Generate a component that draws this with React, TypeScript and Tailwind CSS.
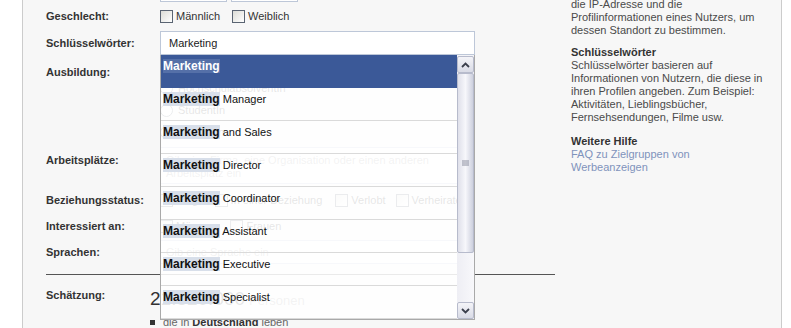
import type { ReactNode } from 'react'

/**
 * Ad targeting form: keyword field with its suggestion list open over
 * the rest of the form, help text in the right column.
 */

const SUGGESTIONS = [
  '',
  'Manager',
  'and Sales',
  'Director',
  'Coordinator',
  'Assistant',
  'Executive',
  'Specialist',
]

export default function App() {
  return (
    <div className="flex h-[328px] w-[791px] overflow-hidden bg-white font-['Liberation_Sans',Arial,sans-serif] text-[11px] leading-[13px] text-[#333]">
      <div className="w-[22px] shrink-0" />
      <div className="flex w-[760px] shrink-0 border-x border-[#cccccc] bg-[#f7f7f7]">
        <Form />
        <Sidebar />
      </div>
    </div>
  )
}

function Form() {
  return (
    <div className="w-[548px] shrink-0 pl-[23px] pr-[16px]">
      {/* bottom edge of the fields above, scrolled out of view */}
      <div className="ml-[114px] flex h-[2px] gap-[4px]">
        <div className="h-[2px] w-[67px] border-x border-b border-[#bdc7d8] bg-white" />
        <div className="h-[2px] w-[67px] border-x border-b border-[#bdc7d8] bg-white" />
      </div>

      <Row label="Geschlecht:" className="h-[29px] items-center">
        <div className="flex items-center">
          <Check label="Männlich" />
          <div className="w-[12px]" />
          <Check label="Weiblich" />
        </div>
      </Row>

      <Row label="Schlüsselwörter:" className="h-[24px] items-center">
        <div className="relative">
          <div className="flex h-[24px] w-[315px] items-center border border-[#bdc7d8] bg-white pl-[8px] text-[#222]">
            Marketing
          </div>
          <Suggestions />
        </div>
      </Row>

      <Row label="Ausbildung:" className="h-[92px]" labelClass="pt-[11px]">
        <div className="flex flex-col">
          <Radio label="Alle" />
          <Radio label="HochschulabsolventIn" />
          <Radio label="StudentIn" />
          <Radio label="SchülerIn" />
        </div>
      </Row>

      <Row label="Arbeitsplätze:" className="h-[42px]" labelClass="pt-[7px]">
        <div className="h-[37px] w-[315px] border border-[#bdc7d8] bg-white pl-[5px] pt-[6px] text-[#999]">
          Gib eine Firma, eine Organisation oder einen anderen
          <br />
          Arbeitsplatz ein
        </div>
      </Row>

      <Row label="Beziehungsstatus:" className="h-[23px] items-center">
        <div className="flex items-center">
          <Check label="Single" />
          <div className="w-[8px]" />
          <Check label="In einer Beziehung" />
          <div className="w-[13px]" />
          <Check label="Verlobt" />
          <div className="w-[10px]" />
          <Check label="Verheiratet" />
        </div>
      </Row>

      <Row label="Interessiert an:" className="h-[28px] items-center">
        <div className="flex items-center">
          <Check label="Männern" />
          <div className="w-[11px]" />
          <Check label="Frauen" />
        </div>
      </Row>

      <Row label="Sprachen:" className="h-[24px] items-center">
        <div className="flex h-[24px] w-[315px] items-center border border-[#bdc7d8] bg-white pl-[5px] text-[#999]">
          Gib eine Sprache ein
        </div>
      </Row>

      <div className="mt-[10px] border-t border-[#555]" />

      <div className="flex h-[60px] pt-[14px]">
        <div className="w-[104px] shrink-0 font-bold text-[#333]">Schätzung:</div>
        <div className="flex flex-col">
          <div className="flex items-baseline gap-[4px]">
            <span className="text-[19px] leading-[20px] text-[#333]">21.520.000</span>
            <span className="text-[13px] text-[#999]">Personen</span>
          </div>
          <div className="mt-[7px] flex items-center gap-[8px] text-[#666]">
            <span className="h-[5px] w-[5px] bg-[#333]" />
            <span>
              die in <b className="text-[#333]">Deutschland</b> leben
            </span>
          </div>
        </div>
      </div>
    </div>
  )
}

function Row({
  label,
  className,
  labelClass,
  children,
}: {
  label: string
  className?: string
  labelClass?: string
  children: ReactNode
}) {
  return (
    <div className={`flex ${className ?? ''}`}>
      <div className={`w-[114px] shrink-0 font-bold text-[#333] ${labelClass ?? ''}`}>{label}</div>
      {children}
    </div>
  )
}

function Check({ label }: { label: string }) {
  return (
    <div className="flex items-center gap-[3px]">
      <span className="h-[13px] w-[13px] border border-[#5a6472] bg-gradient-to-br from-[#dcdcd6] to-white" />
      <span className="text-[#333]">{label}</span>
    </div>
  )
}

function Radio({ label }: { label: string }) {
  return (
    <div className="flex h-[22px] items-center gap-[5px]">
      <span className="h-[13px] w-[13px] rounded-full border border-[#5a6472] bg-white" />
      <span className="text-[#333]">{label}</span>
    </div>
  )
}

function Suggestions() {
  return (
    <div className="absolute left-0 top-[24px] z-10 flex h-[265px] w-[315px] border border-t-0 border-[#a9a9a9] bg-white/[0.88]">
      <div className="flex-1">
        {SUGGESTIONS.map((rest, i) => {
          const active = i === 0
          return (
            <div
              key={i}
              className={`h-[33px] pl-[2px] pt-[4px] text-[12px] leading-[14px] ${
                active ? 'bg-[#3b5998] text-white' : 'border-b border-[#dadada] text-[#111]'
              }`}
            >
              <b className={active ? 'bg-[#5570a8]' : 'bg-[#d8dfea]'}>Marketing</b>
              {rest && <span className="text-[11px]"> {rest}</span>}
            </div>
          )
        })}
      </div>
      <Scrollbar />
    </div>
  )
}

function Scrollbar() {
  return (
    <div className="flex w-[17px] flex-col bg-[#f3f3f7] pt-[1px]">
      <ArrowButton dir="up" />
      <div className="flex h-[180px] items-center justify-center rounded-[2px] border border-[#b7bbcc] bg-gradient-to-r from-[#dfe0ea] via-[#f7f7fb] to-[#cdd0de]">
        <svg width="7" height="7" viewBox="0 0 7 7" className="text-[#8c8fa0]">
          <path d="M0 1h7M0 3h7M0 5h7" stroke="currentColor" strokeWidth="1" />
        </svg>
      </div>
      <div className="flex-1 bg-gradient-to-r from-[#eeeef4] to-[#f8f8fb]" />
      <ArrowButton dir="down" />
    </div>
  )
}

function ArrowButton({ dir }: { dir: 'up' | 'down' }) {
  return (
    <div className="flex h-[17px] items-center justify-center rounded-[2px] border border-[#b7bbcc] bg-gradient-to-b from-[#f4f4f8] to-[#d9dbe6]">
      <svg width="9" height="6" viewBox="0 0 9 6">
        <path
          d={dir === 'up' ? 'M1 5L4.5 1.5L8 5' : 'M1 1L4.5 4.5L8 1'}
          fill="none"
          stroke="#3b3f4c"
          strokeWidth="1.8"
        />
      </svg>
    </div>
  )
}

function Sidebar() {
  return (
    <div className="-mt-[2px] w-[209px] shrink-0 pl-[0px] text-[#4a4a4a]">
      <p>
        die IP-Adresse und die
        <br />
        Profilinformationen eines Nutzers, um
        <br />
        dessen Standort zu bestimmen.
      </p>
      <h3 className="mt-[9px] font-bold text-[#333]">Schlüsselwörter</h3>
      <p>
        Schlüsselwörter basieren auf
        <br />
        Informationen von Nutzern, die diese in
        <br />
        ihren Profilen angeben. Zum Beispiel:
        <br />
        Aktivitäten, Lieblingsbücher,
        <br />
        Fernsehsendungen, Filme usw.
      </p>
      <h3 className="mt-[11px] font-bold text-[#333]">Weitere Hilfe</h3>
      <p className="text-[#7f93bc]">
        FAQ zu Zielgruppen von
        <br />
        Werbeanzeigen
      </p>
    </div>
  )
}
